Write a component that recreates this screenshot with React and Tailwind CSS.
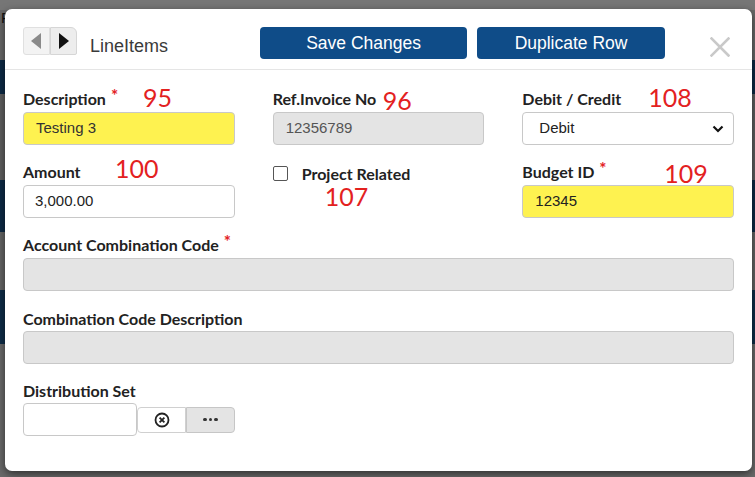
import React from "react";

const label = "font-['Lato',sans-serif] font-bold text-[16px] text-[#222] leading-5";
const red = "absolute font-['Lato',sans-serif] text-[25px] leading-none text-[#e3211f]";
const inputBase =
  "h-[33px] w-full rounded-[4px] border border-[#c8c8c8] px-3 flex items-center font-['Liberation_Sans',Arial,sans-serif] text-[15px]";

function Star() {
  return <span className="text-[#e3211f] ml-[5px] relative -top-[3px] text-[17px]">*</span>;
}

export default function App() {
  return (
    <div className="relative w-[755px] h-[477px] overflow-hidden bg-[#666]">
      {/* dimmed background page */}
      <div className="flex flex-col h-full">
        <div className="h-[10px] bg-[#767676]" />
        <div className="h-[50px] bg-[#686868] pl-[1px] font-['Liberation_Sans',Arial,sans-serif] text-[15px] text-[#111] leading-4">F</div>
        <div className="h-[34px] bg-[#0d2a45]" />
        <div className="h-[86px] bg-[#5f5f5f]" />
        <div className="h-[52px] bg-[#0d2a45]" />
        <div className="h-[58px] bg-[#646464]" />
        <div className="h-[54px] bg-[#0f2d48]" />
        <div className="flex-1 bg-[#6a6a6a]" />
      </div>

      {/* modal */}
      <div className="absolute left-[5px] top-[9px] w-[747px] h-[462px] bg-white rounded-[7px] shadow-[0_3px_8px_rgba(0,0,0,0.55)] flex flex-col">
        {/* header */}
        <div className="h-[61px] border-b border-[#e5e5e5] flex items-start pl-[18px] pr-[20px] pt-[18px]">
          <div className="flex h-[28px]">
            <div className="w-[27px] h-[28px] bg-[#f3f3f3] border border-[#e0e0e0] rounded-l-[3px] flex items-center justify-center">
              <svg width="11" height="16" viewBox="0 0 11 16"><polygon points="10,0 10,16 0,8" fill="#8a8a8a" /></svg>
            </div>
            <div className="w-[27px] h-[28px] bg-[#ededed] border border-[#d6d6d6] rounded-tr-[6px] rounded-br-[2px] flex items-center justify-center">
              <svg width="11" height="16" viewBox="0 0 11 16"><polygon points="1,0 1,16 11,8" fill="#111" /></svg>
            </div>
          </div>
          <div className="ml-[13px] mt-[9px] font-['Liberation_Sans',Arial,sans-serif] text-[18px] text-[#3a3a3a] leading-5">LineItems</div>
          <div className="ml-[92px] w-[207px] h-[32px] bg-[#0f4c88] rounded-[4px] flex items-center justify-center font-['Liberation_Sans',Arial,sans-serif] text-[17.5px] text-white">
            Save Changes
          </div>
          <div className="ml-[10px] w-[188px] h-[32px] bg-[#0f4c88] rounded-[4px] flex items-center justify-center font-['Liberation_Sans',Arial,sans-serif] text-[17.5px] text-white">
            Duplicate Row
          </div>
          <div className="ml-[45px] mt-[10px]">
            <svg width="20" height="20" viewBox="0 0 20 20">
              <path d="M1.5 1.5 L18.5 18.5 M18.5 1.5 L1.5 18.5" stroke="#c9c9c9" strokeWidth="2.6" strokeLinecap="square" />
            </svg>
          </div>
        </div>

        {/* body */}
        <div className="px-[18px] pt-[19px] flex flex-col">
          <div className="grid grid-cols-3 gap-x-[38px]">
            {/* Description */}
            <div className="relative flex flex-col">
              <div className={label}>Description<Star /></div>
              <span className={`${red} left-[120px] -top-[4px]`}>95</span>
              <div className={`${inputBase} mt-[3px] bg-[#fef250] text-[#333]`}>Testing 3</div>
            </div>
            {/* Ref invoice */}
            <div className="relative flex flex-col">
              <div className={label}>Ref.Invoice No</div>
              <span className={`${red} left-[110px] -top-[1px]`}>96</span>
              <div className={`${inputBase} mt-[3px] bg-[#e4e4e4] text-[#555]`}>12356789</div>
            </div>
            {/* Debit / Credit */}
            <div className="relative flex flex-col">
              <div className={label}>Debit / Credit</div>
              <span className={`${red} left-[126px] -top-[4px]`}>108</span>
              <div className={`${inputBase} mt-[3px] bg-white text-[#222] pl-4 pr-[9px] justify-between`}>
                <span>Debit</span>
                <svg width="12" height="8" viewBox="0 0 12 8"><path d="M1.5 1.5 L6 6 L10.5 1.5" stroke="#111" strokeWidth="2.2" fill="none" /></svg>
              </div>
            </div>

            {/* Amount */}
            <div className="relative flex flex-col mt-[17px]">
              <div className={label}>Amount</div>
              <span className={`${red} left-[92px] -top-[6px]`}>100</span>
              <div className={`${inputBase} mt-[3px] h-[32px] bg-white text-[#222] pl-[11px]`}>3,000.00</div>
            </div>
            {/* Project related */}
            <div className="relative flex flex-col mt-[21px]">
              <div className="flex items-center">
                <div className="w-[15px] h-[15px] border-[1.5px] border-[#555] rounded-[2px] bg-white" />
                <div className="font-['Lato',sans-serif] font-bold text-[16px] text-[#222] leading-[14px] ml-[14px]">Project Related</div>
              </div>
              <span className={`${red} left-[52px] top-[18px]`}>107</span>
            </div>
            {/* Budget ID */}
            <div className="relative flex flex-col mt-[17px]">
              <div className={label}>Budget ID<Star /></div>
              <span className={`${red} left-[142px] -top-[1px]`}>109</span>
              <div className={`${inputBase} mt-[3px] h-[32px] bg-[#fef250] text-[#222]`}>12345</div>
            </div>
          </div>

          <div className="flex flex-col mt-[17px]">
            <div className={label}>Account Combination Code<Star /></div>
            <div className={`${inputBase} mt-[3px] bg-[#e4e4e4]`} />
          </div>

          <div className="flex flex-col mt-[18px]">
            <div className={label}>Combination Code Description</div>
            <div className={`${inputBase} mt-[2px] h-[32px] bg-[#e4e4e4]`} />
          </div>

          <div className="flex flex-col mt-[17px]">
            <div className={label}>Distribution Set</div>
            <div className="flex items-center mt-[2px]">
              <div className="w-[114px] h-[33px] rounded-[4px] border border-[#c8c8c8] bg-white" />
              <div className="w-[49px] h-[26px] border border-[#d0d0d0] rounded-l-[4px] bg-white flex items-center justify-center">
                <svg width="16" height="16" viewBox="0 0 16 16">
                  <circle cx="8" cy="8" r="6.5" stroke="#222" strokeWidth="1.8" fill="none" />
                  <path d="M5.6 5.6 L10.4 10.4 M10.4 5.6 L5.6 10.4" stroke="#222" strokeWidth="1.8" />
                </svg>
              </div>
              <div className="w-[49px] h-[26px] border border-[#c6c6c6] rounded-r-[4px] bg-[#e4e4e4] flex items-center justify-center gap-[2px]">
                <span className="w-[3.5px] h-[3.5px] rounded-full bg-[#333]" />
                <span className="w-[3.5px] h-[3.5px] rounded-full bg-[#333]" />
                <span className="w-[3.5px] h-[3.5px] rounded-full bg-[#333]" />
              </div>
            </div>
          </div>
        </div>
      </div>
    </div>
  );
}
